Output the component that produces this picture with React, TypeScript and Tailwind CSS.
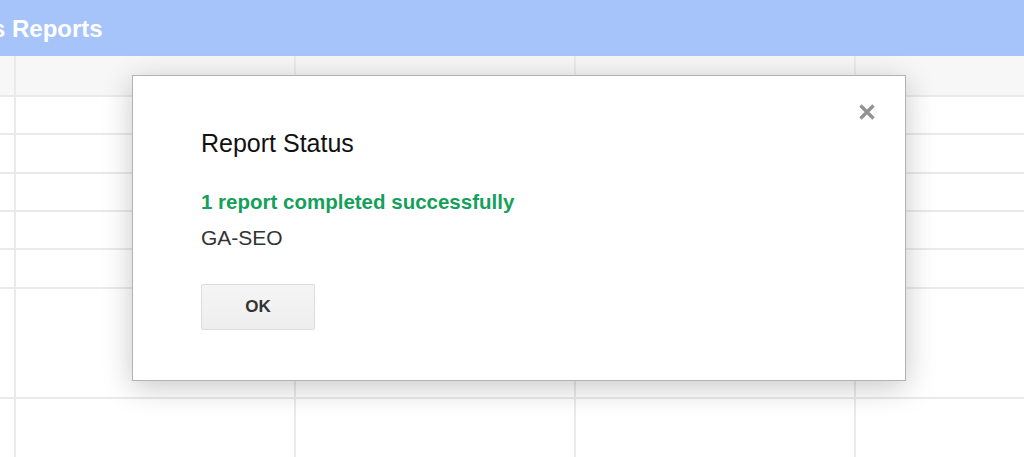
const rowHeights = [38, 39, 38, 38, 39, 110, 60];

function Row({ h, head }: { h: number; head?: boolean }) {
  return (
    <div
      className={`flex border-b-2 border-[#eaeaea] ${head ? "bg-[#f7f7f7]" : "bg-white"}`}
      style={{ height: h }}
    >
      <div className="w-[16px] shrink-0 border-r-2 border-[#eaeaea] pr-px" />
      <div className="w-[280px] shrink-0 border-r-2 border-[#eaeaea]" />
      <div className="w-[280px] shrink-0 border-r-2 border-[#eaeaea]" />
      <div className="w-[280px] shrink-0 border-r-2 border-[#eaeaea]" />
      <div className="flex-1" />
    </div>
  );
}

export default function App() {
  return (
    <div className="relative h-[457px] w-[1024px] overflow-hidden bg-white font-['Liberation_Sans',Arial,sans-serif]">
      <div className="flex h-[56px] items-center bg-[#a6c3fa] pt-[1px]">
        <span className="-ml-[8px] text-[24px] font-bold text-white">s Reports</span>
      </div>

      <Row h={41} head />
      {rowHeights.map((h, i) => (
        <Row key={i} h={h} />
      ))}

      {/* dialog */}
      <div className="absolute left-[132px] top-[75px] h-[306px] w-[774px] border border-[#b3b3b3] bg-white px-[68px] pt-[52px] shadow-[0_6px_28px_rgba(0,0,0,0.22)]">
        <button className="absolute right-[29px] top-[27px] flex h-[18px] w-[18px] items-center justify-center">
          <svg width="18" height="18" viewBox="0 0 18 18">
            <path d="M2.5 2.5 L15.5 15.5 M15.5 2.5 L2.5 15.5" stroke="#929292" strokeWidth="3.4" strokeLinecap="butt" />
          </svg>
        </button>
        <h2 className="text-[25px] leading-[30px] text-[#111]">Report Status</h2>
        <p className="mt-[32px] text-[20.5px] font-bold leading-[24px] text-[#14a05a]">
          1 report completed successfully
        </p>
        <p className="mt-[12px] text-[21px] leading-[24px] text-[#333]">GA-SEO</p>
        <button className="mt-[34px] flex h-[46px] w-[114px] items-center justify-center rounded-[2px] border border-[#dcdcdc] bg-gradient-to-b from-[#f5f5f5] to-[#eeeeee] text-[17px] font-bold text-[#333]">
          OK
        </button>
      </div>
    </div>
  );
}
